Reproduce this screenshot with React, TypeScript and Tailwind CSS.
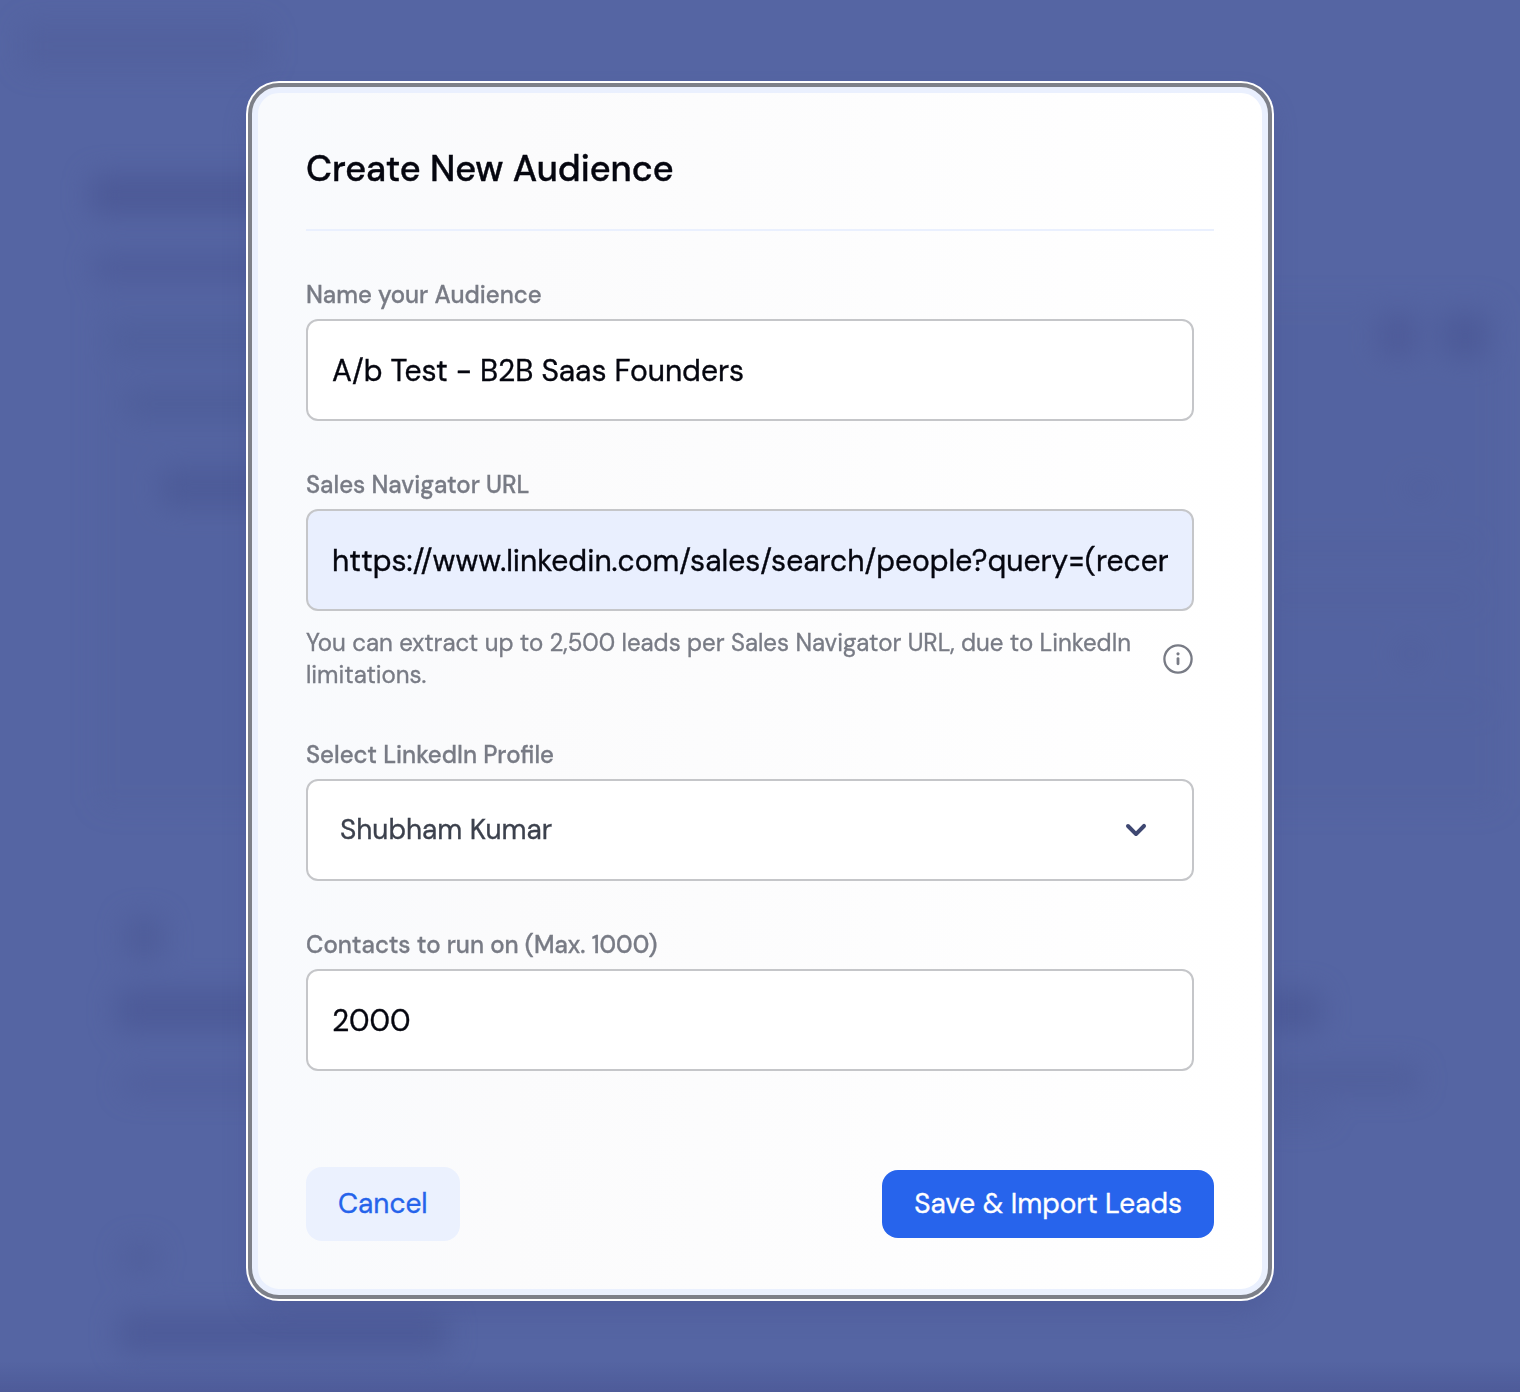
import React from 'react';

interface FieldProps {
  label: string;
  children: React.ReactNode;
}

const inputClass =
  'block w-full h-[102px] px-6 border-2 border-[#c5c6c9] rounded-xl text-[30px] text-[#05060f] outline-none [-webkit-text-stroke:0.35px]';

// soft shapes of the page behind the overlay: [x, y, width, height, opacity]
const backdropShapes = [
  [20, 22, 250, 48, 0.3],
  [90, 174, 340, 42, 0.8],
  [92, 252, 340, 32, 0.55],
  [110, 325, 300, 32, 0.35],
  [125, 388, 300, 32, 0.45],
  [160, 468, 200, 40, 0.75],
  [95, 300, 1405, 510, 0.12],
  [124, 916, 40, 44, 0.6],
  [116, 988, 300, 44, 0.75],
  [122, 1072, 300, 24, 0.4],
  [122, 1242, 36, 32, 0.45],
  [118, 1312, 330, 42, 0.75],
  [1378, 314, 40, 44, 0.65],
  [1442, 314, 46, 44, 0.75],
  [1404, 478, 32, 20, 0.3],
  [1260, 540, 220, 12, 0.2],
  [1260, 592, 220, 12, 0.2],
  [1395, 642, 32, 24, 0.3],
  [1260, 700, 230, 12, 0.15],
  [1260, 990, 62, 42, 0.75],
  [1260, 1064, 160, 30, 0.45],
  [1260, 1104, 70, 20, 0.35],
];

const Backdrop: React.FC = () => (
  <svg className="absolute inset-0 w-full h-full" viewBox="0 0 1520 1392" aria-hidden="true">
    <defs>
      <filter id="soften" x="-20%" y="-20%" width="140%" height="140%" colorInterpolationFilters="sRGB">
        <feGaussianBlur stdDeviation="13" />
      </filter>
      <linearGradient id="page-end" x1="0" y1="0" x2="0" y2="1">
        <stop offset="0%" stopColor="#4e5b99" stopOpacity="0" />
        <stop offset="100%" stopColor="#4e5b99" stopOpacity="1" />
      </linearGradient>
    </defs>
    <g filter="url(#soften)" fill="#4b5895">
      {backdropShapes.map(([x, y, w, h, o], i) => (
        <rect key={i} x={x} y={y} width={w} height={h} rx="10" opacity={o} />
      ))}
    </g>
    <rect x="0" y="1362" width="1520" height="30" fill="url(#page-end)" />
  </svg>
);

const Field: React.FC<FieldProps> = ({ label, children }) => (
  <div>
    <label className="block mb-2 text-2xl font-medium text-[#787b85] [-webkit-text-stroke:0.3px]">{label}</label>
    {children}
  </div>
);

const InfoIcon: React.FC = () => (
  <svg width="32" height="32" viewBox="0 0 32 32" fill="none" className="flex-shrink-0 text-[#787b85]">
    <circle cx="16" cy="16" r="13.6" stroke="currentColor" strokeWidth="2.3" />
    <circle cx="16" cy="10.8" r="1.6" fill="currentColor" />
    <path d="M16 15.6v5.2" stroke="currentColor" strokeWidth="2.8" strokeLinecap="round" />
  </svg>
);

const ChevronIcon: React.FC = () => (
  <svg width="40" height="40" viewBox="0 0 20 20" className="text-[#3f4872]" fill="currentColor">
    <path
      fillRule="evenodd"
      clipRule="evenodd"
      d="M5.293 7.293a1 1 0 011.414 0L10 10.586l3.293-3.293a1 1 0 111.414 1.414l-4 4a1 1 0 01-1.414 0l-4-4a1 1 0 010-1.414z"
    />
  </svg>
);

export default function App() {
  return (
    <div className="relative w-full h-[1392px] flex justify-center pt-[87px] overflow-hidden bg-[#5565a3] font-['DM_Sans','Inter',sans-serif]">
      <Backdrop />

      {/* Modal */}
      <div className="relative w-[1016px] h-[1208px] p-12 border-[6px] border-[#eaf0fe] rounded-[27px] bg-[#eaf0fe] bg-linear-to-r from-[#f8fafd] from-0% via-[#fbfbfc] via-25% to-white shadow-[0_0_0_4px_#7d8089,0_0_0_6px_#ffffff,0_14px_26px_2px_#4b57947f]">
        <div className="pb-8 border-b-2 border-[#eaf0fe]">
          <h2 className="text-4xl leading-[56px] font-medium text-[#05060f] [-webkit-text-stroke:0.4px]">
            Create New Audience
          </h2>
        </div>

        <form className="mt-12" onSubmit={(e) => e.preventDefault()}>
          <div className="pr-5 space-y-12">
            <Field label="Name your Audience">
              <input type="text" className={`${inputClass} bg-white`} defaultValue="A/b Test - B2B Saas Founders" />
            </Field>

            <Field label="Sales Navigator URL">
              <input
                type="text"
                className={`${inputClass} bg-[#e9effe]`}
                defaultValue="https://www.linkedin.com/sales/search/people?query=(recer"
              />
              <div className="mt-4 flex items-center justify-between gap-6">
                <p className="text-2xl text-[#787b85] [-webkit-text-stroke:0.35px]">
                  You can extract up to 2,500 leads per Sales Navigator URL, due to LinkedIn limitations.
                </p>
                <InfoIcon />
              </div>
            </Field>

            <Field label="Select LinkedIn Profile">
              <div className="h-[102px] pl-8 pr-9 flex items-center justify-between border-2 border-[#c5c6c9] rounded-xl bg-white">
                <span className="text-[28px] text-[#3c414d] [-webkit-text-stroke:0.35px]">Shubham Kumar</span>
                <ChevronIcon />
              </div>
            </Field>

            <Field label="Contacts to run on (Max. 1000)">
              <input type="text" className={`${inputClass} bg-white`} defaultValue="2000" />
            </Field>
          </div>

          {/* Actions */}
          <div className="mt-24 flex items-center justify-between">
            <button
              type="button"
              className="h-[74px] px-8 rounded-2xl bg-[#ebf1fe] text-[28px] text-[#2563eb] [-webkit-text-stroke:0.35px]"
            >
              Cancel
            </button>
            <button
              type="submit"
              className="h-[68px] px-8 rounded-2xl bg-[#2764ec] text-[28px] text-white [-webkit-text-stroke:0.35px]"
            >
              Save &amp; Import Leads
            </button>
          </div>
        </form>
      </div>
    </div>
  );
}
